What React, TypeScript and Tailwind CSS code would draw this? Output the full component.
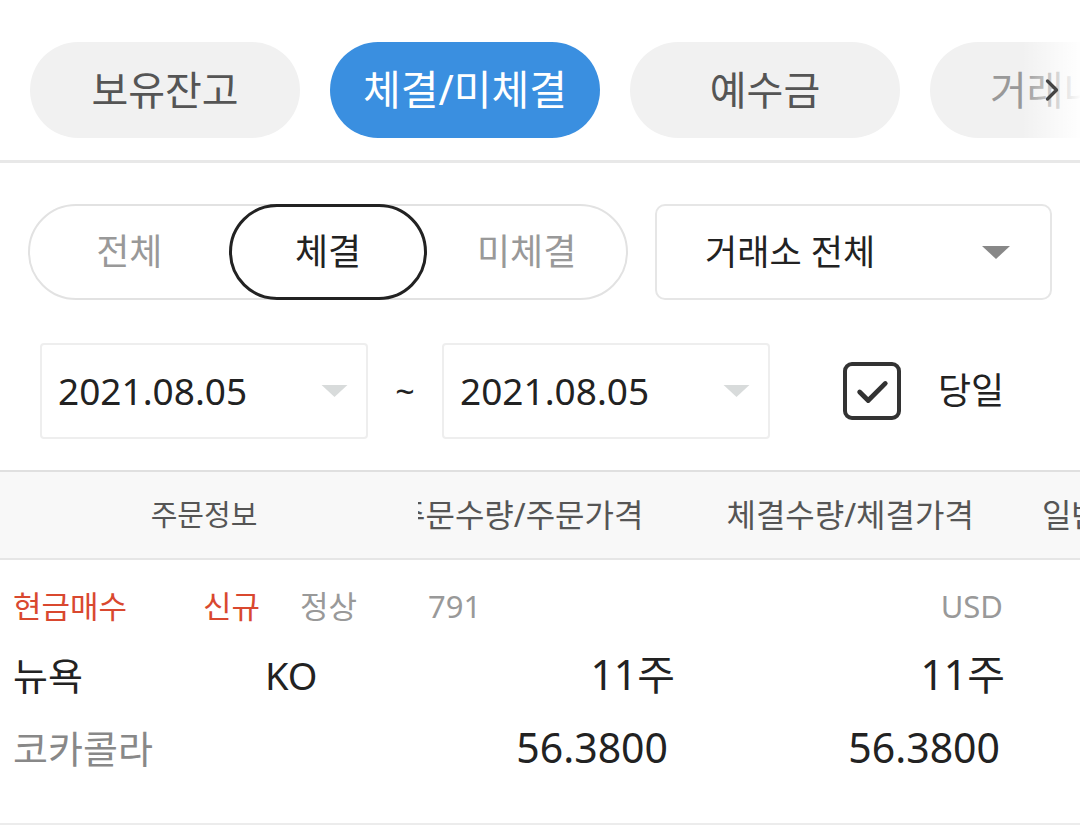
import { ChevronRight } from 'lucide-react';

const font = { fontFamily: '"Noto Sans", "Noto Sans CJK KR", sans-serif' };

function Caret({ className }: { className: string }) {
  return (
    <svg viewBox="0 0 28 13" className={className}>
      <path d="M0 0 L28 0 L14 13 Z" fill="currentColor" />
    </svg>
  );
}

function DateBox({ value }: { value: string }) {
  return (
    <div className="w-[328px] h-[96px] border-2 border-[#eeeeee] rounded-[4px] flex items-center justify-between pl-[16px] pr-[18px]">
      <span className="text-[37px] text-[#222]">{value}</span>
      <Caret className="w-[27px] h-[12px] text-[#d8dbdb]" />
    </div>
  );
}

export default function App() {
  const tabs = ['보유잔고', '체결/미체결', '예수금'];

  return (
    <div className="w-[1080px] h-[838px] overflow-hidden bg-white text-[#222]" style={font}>
      {/* Top tabs */}
      <div className="h-[163px] border-b-[3px] border-[#e8e8e8] pt-[42px] overflow-hidden">
        <div className="flex gap-[30px] pl-[30px]">
          {tabs.map((t, i) => (
            <div
              key={t}
              className={
                i === 1
                  ? 'shrink-0 w-[270px] h-[96px] rounded-full bg-[#3a8fe0] text-white flex items-center justify-center text-[41px]'
                  : 'shrink-0 w-[270px] h-[96px] rounded-full bg-[#f1f1f1] text-[#555] flex items-center justify-center text-[40px]'
              }
            >
              {t}
            </div>
          ))}
          <div className="relative shrink-0 w-[270px] h-[96px] rounded-full bg-[#f1f1f1] text-[#999] flex items-center pl-[60px] text-[40px] overflow-hidden">
            거래내역
            <div className="absolute inset-y-0 left-[92px] w-[60px] bg-gradient-to-r from-white/0 to-white" />
            <div className="absolute inset-y-0 left-[150px] right-0 bg-white" />
            <ChevronRight className="absolute left-[104px] top-[30px] w-[36px] h-[36px] text-[#444]" strokeWidth={2.2} />
          </div>
        </div>
      </div>

      {/* Filter row */}
      <div className="flex items-center gap-[27px] pl-[28px] mt-[41px]">
        <div className="w-[600px] h-[96px] border-2 border-[#e2e2e2] rounded-full flex items-center text-[36px]">
          <div className="w-[200px] text-center text-[#999]">전체</div>
          <div className="w-[200px] h-[96px] border-[3px] border-[#222] rounded-full flex items-center justify-center text-[#222]">
            체결
          </div>
          <div className="w-[200px] text-center text-[#999]">미체결</div>
        </div>
        <div className="w-[397px] h-[96px] border-2 border-[#e6e6e6] rounded-[10px] flex items-center justify-between pl-[48px] pr-[40px]">
          <span className="text-[35px] text-[#222]">거래소 전체</span>
          <Caret className="w-[28px] h-[13px] text-[#888]" />
        </div>
      </div>

      {/* Date row */}
      <div className="flex items-center pl-[40px] mt-[43px]">
        <DateBox value="2021.08.05" />
        <div className="w-[74px] text-center text-[34px] text-[#222]">~</div>
        <DateBox value="2021.08.05" />
        <div className="ml-[73px] w-[58px] h-[58px] border-[4px] border-[#333] rounded-[9px] flex items-center justify-center">
          <svg viewBox="0 0 40 40" className="w-[38px] h-[38px]">
            <path d="M7 21 L16 30 L34 12" fill="none" stroke="#333" strokeWidth="5" strokeLinecap="round" strokeLinejoin="round" />
          </svg>
        </div>
        <span className="ml-[37px] text-[36px] text-[#222]">당일</span>
      </div>

      {/* Table header */}
      <div className="mt-[31px] border-t-[2px] border-[#e0e0e0] border-b-[2px] border-b-[#e6e6e6] bg-[#f8f8f8] h-[90px] flex items-center text-[#555] overflow-hidden">
        <div className="w-[418px] shrink-0 text-center pr-[10px] text-[29px]">주문정보</div>
        <div className="flex-1 overflow-hidden text-[32px]">
          <div className="flex whitespace-nowrap -ml-[22px]">
            <span className="shrink-0">주문수량/주문가격</span>
            <span className="shrink-0 ml-[83px]">체결수량/체결가격</span>
            <span className="shrink-0 ml-[68px]">일반주문</span>
          </div>
        </div>
      </div>

      {/* Row */}
      <div className="pt-[20px] pb-[45px] border-b-[2px] border-[#ececec]">
        <div className="h-[52px] flex items-center text-[31px]">
          <div className="w-[418px] flex items-center pl-[13px]">
            <span className="w-[190px] text-[#d9482f]">현금매수</span>
            <span className="w-[97px] text-[#d9482f]">신규</span>
            <span className="text-[#999]">정상</span>
          </div>
          <div className="w-[262px] pl-[10px] text-[#999]">791</div>
          <div className="w-[330px] text-right pr-[7px] text-[#999]">USD</div>
        </div>
        <div className="h-[86px] flex items-center text-[38px]">
          <div className="w-[418px] flex items-center pl-[13px]">
            <span className="w-[252px]">뉴욕</span>
            <span>KO</span>
          </div>
          <div className="w-[262px] text-right pr-[5px] text-[41px]">11주</div>
          <div className="w-[330px] text-right pr-[5px] text-[41px]">11주</div>
        </div>
        <div className="h-[60px] flex items-center text-[38px]">
          <div className="w-[418px] pl-[13px] text-[#888]">코카콜라</div>
          <div className="w-[262px] text-right pr-[12px] text-[41px]">56.3800</div>
          <div className="w-[330px] text-right pr-[10px] text-[41px]">56.3800</div>
        </div>
      </div>
    </div>
  );
}
